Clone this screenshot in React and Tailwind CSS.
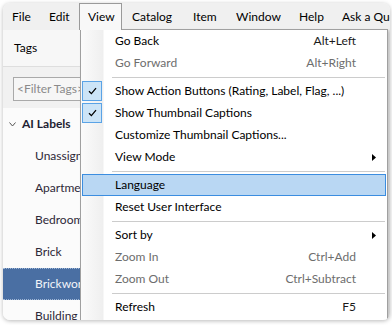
import React from "react";

function Check() {
  return (
    <div className="w-[20px] h-[20px] border border-[#5aa3e6] bg-[#cce4f7] flex items-center justify-center">
      <svg width="9" height="8" viewBox="0 0 9 8">
        <path d="M1 4.2 L3.4 6.6 L8 1.2" fill="none" stroke="#000" strokeWidth="1.3" />
      </svg>
    </div>
  );
}

function Arrow() {
  return (
    <svg width="4" height="7" viewBox="0 0 4 7">
      <path d="M0 0 L4 3.5 L0 7 Z" fill="#000" />
    </svg>
  );
}

function Item({ label, shortcut, checked, disabled, arrow, highlighted }) {
  return (
    <div
      className={
        "h-[22px] mx-[1px] flex items-center " +
        (highlighted ? "bg-[#b9d7f3] shadow-[inset_0_0_0_1px_#3b8de0]" : "")
      }
    >
      <div className="w-[20px] h-[20px] shrink-0">{checked ? <Check /> : null}</div>
      <span className={"ml-[13px] flex-1 whitespace-nowrap " + (disabled ? "text-[#6d6d6d]" : "text-black")}>
        {label}
      </span>
      {shortcut ? (
        <span className={"whitespace-nowrap " + (disabled ? "text-[#6d6d6d]" : "text-[#1a1a1a]")}>{shortcut}</span>
      ) : null}
      <div className="w-[30px] h-full shrink-0 flex items-center pl-[16px]">{arrow ? <Arrow /> : null}</div>
    </div>
  );
}

function Sep() {
  return (
    <div className="h-[6px] ml-[31px] mr-[2px] flex items-center">
      <div className="h-px w-full bg-[#cccccc]" />
    </div>
  );
}

function Row({ label, selected }) {
  return (
    <div
      className={
        "h-[32px] shrink-0 flex items-center pl-[32px] whitespace-nowrap " +
        (selected
          ? "bg-[#4a6fa3] text-[#f2f5fa] border-y border-dotted border-[#9fb6d6]"
          : "text-[#2e2838]")
      }
    >
      {label}
    </div>
  );
}

export default function App() {
  const menus = [
    ["File", "w-[37px]"],
    ["Edit", "w-[39px]"],
  ];
  const menus2 = [
    ["Catalog", "w-[61px]"],
    ["Item", "w-[43px]"],
    ["Window", "w-[63px]"],
    ["Help", "w-[43px]"],
    ["Ask a Question", "w-[120px]"],
  ];
  return (
    <div className="w-[392px] h-[325px] bg-white pt-[3px] pl-[3px] pr-[2px] pb-[5px] flex font-[family-name:Lato,'Noto_Sans',sans-serif] text-[12px]">
      <div className="relative flex-1 flex flex-col rounded-[7px] overflow-hidden shadow-[0_1px_4px_rgba(0,0,0,0.28)] bg-[#fbfbfb]">
        {/* menu bar */}
        <div className="h-[27px] shrink-0 flex items-stretch bg-[#f0f0f0] text-black whitespace-nowrap">
          {menus.map(([m, w]) => (
            <div key={m} className={w + " shrink-0 flex items-center pl-[9px]"}>
              {m}
            </div>
          ))}
          <div className="relative z-20 w-[43px] shrink-0 flex items-center pl-[8px] bg-[#f8f8f8] border-x border-t border-[#9a9a9a]">
            View
          </div>
          {menus2.map(([m, w]) => (
            <div key={m} className={w + " shrink-0 flex items-center pl-[10px]"}>
              {m}
            </div>
          ))}
        </div>

        {/* body */}
        <div className="flex-1 flex min-h-0">
          <div className="w-[260px] shrink-0 flex flex-col bg-[#fbfbfb]">
            <div className="h-[37px] shrink-0 flex items-center pl-[11px] border-b border-[#dedede] bg-[#f7f7f7] text-black">
              Tags
            </div>
            <div className="h-[41px] shrink-0 pt-[10px] pl-[10px] bg-[#f1f1f1]">
              <div className="w-[200px] h-[24px] border border-[#a9a9a9] bg-[#f6f6f6] flex items-center pl-[3px] text-[#8a8a8a]">
                &lt;Filter Tags&gt;
              </div>
            </div>
            <div className="h-[32px] shrink-0 flex items-center pl-[6px] font-bold text-[#1f1f33]">
              <svg width="7" height="5" viewBox="0 0 7 5" className="mr-[6px]">
                <path d="M0.5 0.5 L3.5 4 L6.5 0.5" fill="none" stroke="#555" strokeWidth="1" />
              </svg>
              AI Labels
            </div>
            <Row label="Unassigned" />
            <Row label="Apartment" />
            <Row label="Bedroom" />
            <Row label="Brick" />
            <Row label="Brickwork" selected />
            <Row label="Building" />
          </div>
          <div className="flex-1 bg-[#e4e4e4]" />
        </div>

        {/* dropdown menu */}
        <div className="absolute z-10 left-[77px] top-[26px] w-[308px] h-[320px] border border-[#a0a0a0] bg-[linear-gradient(to_right,#fbfbfb_0px,#efefef_22px,#ffffff_23px)] shadow-[2px_2px_3px_rgba(0,0,0,0.15)]">
          <Item label="Go Back" shortcut="Alt+Left" />
          <Item label="Go Forward" shortcut="Alt+Right" disabled />
          <Sep />
          <Item label="Show Action Buttons (Rating, Label, Flag, ...)" checked />
          <Item label="Show Thumbnail Captions" checked />
          <Item label="Customize Thumbnail Captions..." />
          <Item label="View Mode" arrow />
          <Sep />
          <Item label="Language" highlighted />
          <Item label="Reset User Interface" />
          <Sep />
          <Item label="Sort by" arrow />
          <Item label="Zoom In" shortcut="Ctrl+Add" disabled />
          <Item label="Zoom Out" shortcut="Ctrl+Subtract" disabled />
          <Sep />
          <Item label="Refresh" shortcut="F5" />
        </div>
      </div>
    </div>
  );
}
